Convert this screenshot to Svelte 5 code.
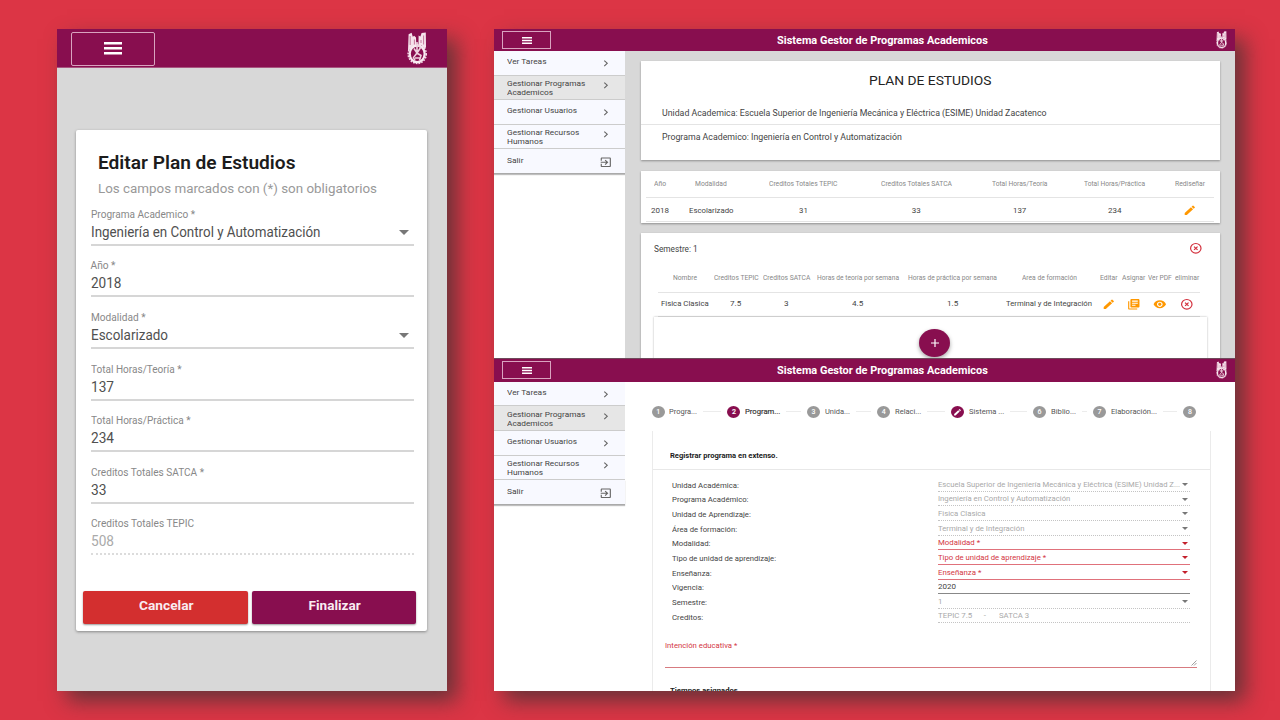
<script>
  // Stretches a line of text horizontally so that it fills the given width.
  function fit(node, width) {
    const natural = node.getBoundingClientRect().width;
    node.style.width = `${width}px`;
    node.style.transform = `scaleX(${width / natural})`;
  }

  const fields = [
    { label: 'Programa Academico *', lw: 104, value: 'Ingeniería en Control y Automatización', vw: 229.5, select: true },
    { label: 'Año *', lw: 25, value: '2018', vw: 30.5 },
    { label: 'Modalidad *', lw: 54.5, value: 'Escolarizado', vw: 77, select: true },
    { label: 'Total Horas/Teoría *', lw: 90.5, value: '137', vw: 23 },
    { label: 'Total Horas/Práctica *', lw: 99.5, value: '234', vw: 23 },
    { label: 'Creditos Totales SATCA *', lw: 113, value: '33', vw: 15.5 },
    { label: 'Creditos Totales TEPIC', lw: 103, value: '508', vw: 23, disabled: true }
  ];

  const menu = [
    { lines: [['Ver Tareas', 39.5]] },
    { lines: [['Gestionar Programas', 78.2], ['Academicos', 46]], active: true },
    { lines: [['Gestionar Usuarios', 70]] },
    { lines: [['Gestionar Recursos', 72.3], ['Humanos', 36]] },
    { lines: [['Salir', 16.5]], exit: true }
  ];

  const plan = [
    ['Año', 12, '2018', 18],
    ['Modalidad', 31.7, 'Escolarizado', 44.5],
    ['Creditos Totales TEPIC', 68.5, '31', 8.8],
    ['Creditos Totales SATCA', 71, '33', 9],
    ['Total Horas/Teoría', 55.5, '137', 13.3],
    ['Total Horas/Práctica', 61, '234', 13.5]
  ];

  const subject = [
    ['Nombre', 24, 'Fisica Clasica', 47.8],
    ['Creditos TEPIC', 44.6, '7.5', 11.2],
    ['Creditos SATCA', 47.3, '3', 4.6],
    ['Horas de teoría por semana', 82, '4.5', 11.3],
    ['Horas de práctica por semana', 89, '1.5', 11.3],
    ['Area de formación', 55, 'Terminal y de Integración', 86]
  ];

  const steps = [
    { n: 1, label: 'Progra...', lw: 28, w: 75.7 },
    { n: 2, label: 'Program...', lw: 35.4, w: 79.6, on: true },
    { n: 3, label: 'Unida...', lw: 25, w: 70.2 },
    { n: 4, label: 'Relaci...', lw: 26.3, w: 74 },
    { n: 5, label: 'Sistema ...', lw: 35.3, w: 81.7, edit: true },
    { n: 6, label: 'Biblio...', lw: 25, w: 60 },
    { n: 7, label: 'Elaboración...', lw: 46, w: 90.5 },
    { n: 8, w: 13 }
  ];

  const details = [
    ['Unidad Académica:', 66.8, 'Escuela Superior de Ingeniería Mecánica y Eléctrica (ESIME) Unidad Z...', 242, 'off', true],
    ['Programa Académico:', 76.5, 'Ingeniería en Control y Automatización', 132.3, 'off', true],
    ['Unidad de Aprendizaje:', 78.8, 'Fisica Clasica', 47.6, 'off', true],
    ['Área de formación:', 65, 'Terminal y de Integración', 86.4, 'off', true],
    ['Modalidad:', 38.4, 'Modalidad *', 42, 'error', true],
    ['Tipo de unidad de aprendizaje:', 104, 'Tipo de unidad de aprendizaje *', 108, 'error', true],
    ['Enseñanza:', 39.6, 'Enseñanza *', 43.3, 'error', true],
    ['Vigencia:', 31.8, '2020', 18, 'plain', false],
    ['Semestre:', 35, '1', 4.4, 'off', true],
    ['Creditos:', 31.2, 'TEPIC 7.5', 34.3, 'off', false]
  ];

  const EDIT = 'M3 17.25V21h3.75L17.81 9.94l-3.75-3.75L3 17.25zM20.71 7.04a.996.996 0 0 0 0-1.41l-2.34-2.34a.996.996 0 0 0-1.41 0l-1.83 1.83 3.75 3.75 1.83-1.83z';
  const BOOKS = 'M4 6H2v14c0 1.1.9 2 2 2h14v-2H4V6zm16-4H8c-1.1 0-2 .9-2 2v12c0 1.1.9 2 2 2h12c1.1 0 2-.9 2-2V4c0-1.1-.9-2-2-2zm-1 9H9V9h10v2zm-4 4H9v-2h6v2zm4-8H9V5h10v2z';
  const EYE = 'M12 4.5C7 4.5 2.73 7.61 1 12c1.73 4.39 6 7.5 11 7.5s9.27-3.11 11-7.5c-1.73-4.39-6-7.5-11-7.5zM12 17c-2.76 0-5-2.24-5-5s2.24-5 5-5 5 2.24 5 5-2.24 5-5 5zm0-8c-1.66 0-3 1.34-3 3s1.34 3 3 3 3-1.34 3-3-1.34-3-3-3z';
  const EXIT = 'M10.09 15.59L11.5 17l5-5-5-5-1.41 1.41L12.67 11H3v2h9.67l-2.58 2.59zM19 3H5c-1.11 0-2 .9-2 2v4h2V5h14v14H5v-4H3v4c0 1.1.89 2 2 2h14c1.1 0 2-.9 2-2V5c0-1.1-.9-2-2-2z';
  const CHEVRON = 'M10 6L8.59 7.41 13.17 12l-4.58 4.59L10 18l6-6z';
</script>

{#snippet t(text, width)}<span class="fit" use:fit={width}>{text}</span>{/snippet}

{#snippet icon(d)}
  <svg class="icon" viewBox="0 0 24 24" preserveAspectRatio="none"><path {d} /></svg>
{/snippet}

{#snippet cancel()}
  <svg class="icon cancel" viewBox="0 0 24 24" preserveAspectRatio="none">
    <circle cx="12" cy="12" r="9.2" /><path d="M8.9 8.9l6.2 6.2M15.1 8.9l-6.2 6.2" />
  </svg>
{/snippet}

{#snippet burger()}
  <div class="burger">
    <svg viewBox="0 0 18 12" preserveAspectRatio="none"><path d="M0 0h18v2.4H0zM0 4.8h18v2.4H0zM0 9.6h18V12H0z" /></svg>
  </div>
{/snippet}

{#snippet crest()}
  <svg class="crest" viewBox="0 0 20 33" preserveAspectRatio="none">
    <path class="solid" d="M1.6 2.2L4.6.8l1.2 4 1.4-1 1.8 1.6.3 8.6-4 1.5L1 19zM11.6 3.6l1.8 1L14.6 1l4.2-.4.2 15-2 .8-2.5-2.9-3-.8z" />
    <circle class="teeth" cx="10.2" cy="22" r="9.1" transform="matrix(1 0 0 1.05 0 -1.2)" />
    <ellipse class="ring" cx="10.2" cy="21.8" rx="7.5" ry="8.3" />
    <path class="detail" d="M10 10v10M7 16.5l3 4.5 4-6M10 21l-3.5 4.5 1.5 3M10.5 21.5l3.5 2-1.5 5M8 26h5M11 13l3 3" />
    <path class="mark" d="M3.2 4v9M16.6 3.5v9M7.4 7.5v5M14 8v3" />
  </svg>
{/snippet}

{#snippet topbar()}
  <header class="bar">
    {@render burger()}
    <h1>{@render t('Sistema Gestor de Programas Academicos', 210.8)}</h1>
    {@render crest()}
  </header>
{/snippet}

{#snippet sidebar()}
  <nav>
    {#each menu as item}
      <div class="item" class:active={item.active} class:double={item.lines.length > 1}>
        <div class="lines">
          {#each item.lines as [text, w]}<div>{@render t(text, w)}</div>{/each}
        </div>
        {@render icon(item.exit ? EXIT : CHEVRON)}
      </div>
    {/each}
  </nav>
{/snippet}

<div class="page">
  <section class="phone">
    <header class="bar">
      {@render burger()}
      {@render crest()}
    </header>
    <div class="form">
      <h2>{@render t('Editar Plan de Estudios', 197.5)}</h2>
      <p>{@render t('Los campos marcados con (*) son obligatorios', 279)}</p>
      {#each fields as f}
        <div class="field" class:disabled={f.disabled}>
          <div class="label">{@render t(f.label, f.lw)}</div>
          <div class="value">{@render t(f.value, f.vw)}{#if f.select}<i class="caret"></i>{/if}</div>
        </div>
      {/each}
      <div class="actions">
        <button class="no">{@render t('Cancelar', 54.5)}</button>
        <button>{@render t('Finalizar', 52)}</button>
      </div>
    </div>
  </section>

  <section class="desk">
    <div class="shot first">
      {@render topbar()}
      <div class="body">
        {@render sidebar()}
        <main class="gray">
          <div class="card intro">
            <h2>{@render t('PLAN DE ESTUDIOS', 122.5)}</h2>
            <div class="line">{@render t('Unidad Academica: Escuela Superior de Ingeniería Mecánica y Eléctrica (ESIME) Unidad Zacatenco', 384.5)}</div>
            <div class="line">{@render t('Programa Academico: Ingeniería en Control y Automatización', 239.8)}</div>
          </div>
          <div class="card plan">
            <div class="row head">
              {#each plan as [h, w]}<div>{@render t(h, w)}</div>{/each}
              <div>{@render t('Rediseñar', 30)}</div>
            </div>
            <div class="row">
              {#each plan as [, , v, w]}<div>{@render t(v, w)}</div>{/each}
              <div>{@render icon(EDIT)}</div>
            </div>
          </div>
          <div class="card term">
            <div class="title">{@render t('Semestre: 1', 43.7)}{@render cancel()}</div>
            <div class="row head">
              {#each subject as [h, w]}<div>{@render t(h, w)}</div>{/each}
              <div>{@render t('Editar', 17.5)}</div>
              <div>{@render t('Asignar', 23.3)}</div>
              <div>{@render t('Ver PDF', 23.8)}</div>
              <div>{@render t('eliminar', 24.3)}</div>
            </div>
            <div class="row">
              {#each subject as [, , v, w]}<div>{@render t(v, w)}</div>{/each}
              <div>{@render icon(EDIT)}</div>
              <div>{@render icon(BOOKS)}</div>
              <div>{@render icon(EYE)}</div>
              <div>{@render cancel()}</div>
            </div>
            <div class="add">
              <div class="fab"><svg viewBox="0 0 10 10"><path d="M5 1v8M1 5h8" /></svg></div>
            </div>
          </div>
        </main>
      </div>
    </div>

    <div class="shot second">
      {@render topbar()}
      <div class="body">
        {@render sidebar()}
        <main>
          <div class="stepper">
            {#each steps as s}
              <div class="step" class:on={s.on} class:edit={s.edit} style:width="{s.w}px">
                <span class="dot">{#if s.edit}{@render icon(EDIT)}{:else}{s.n}{/if}</span>
                {#if s.label}{@render t(s.label, s.lw)}<i></i>{/if}
              </div>
            {/each}
          </div>
          <div class="sheet">
            <h3>{@render t('Registrar programa en extenso.', 107.6)}</h3>
            <div class="grid">
              {#each details as [label, lw, value, vw, kind, select], i}
                <div class="pair">
                  <div class="name">{@render t(label, lw)}</div>
                  <div class="input {kind}">
                    {@render t(value, vw)}
                    {#if i === 9}<span class="dash">-</span>{@render t('SATCA 3', 30)}{/if}
                    {#if select}<i class="caret"></i>{/if}
                  </div>
                </div>
              {/each}
            </div>
            <div class="area">
              {@render t('Intención educativa *', 72.3)}
              <svg viewBox="0 0 6 6"><path d="M.5 5.5l5-5M3 5.5L5.5 3" /></svg>
            </div>
            <h3 class="next">{@render t('Tiempos asignados', 67.8)}</h3>
          </div>
        </main>
      </div>
    </div>
  </section>
</div>

<style>
  :global(body) { margin: 0; background: #dc3545; }
  * { box-sizing: border-box; }
  h1, h2, h3, p { margin: 0; font-weight: 500; }

  .page {
    width: 1280px;
    height: 720px;
    padding: 29px 45px 29px 57px;
    display: flex;
    justify-content: space-between;
    background: #dc3545;
    font-family: Roboto, "Liberation Sans", sans-serif;
    color: #444;
    overflow: hidden;
  }
  .fit { display: block; flex: none; white-space: nowrap; width: max-content; transform-origin: 0 50%; }

  .phone, .desk { height: 662px; box-shadow: 10px 10px 20px rgba(50, 50, 50, .68); }
  .phone { width: 390px; background: #d8d8d8; }
  .desk { width: 741px; background: #fff; overflow: hidden; }

  .bar { display: flex; align-items: center; background: #880e4f; color: #fff; }
  .burger { display: flex; align-items: center; justify-content: center; border: 1px solid #d9a3bf; }
  .burger svg { display: block; fill: #fff; }
  .crest { fill: none; stroke: #fff; }
  .crest .solid { fill: #f6e3ec; stroke: none; }
  .crest .teeth { stroke: #f3dce7; stroke-width: 1.5; stroke-dasharray: 1.7 1.1; }
  .crest .ring { stroke: #f8eaf0; stroke-width: 2.3; }
  .crest .detail { stroke: #eed0de; stroke-width: 1.6; }
  .crest .mark { stroke: #b75c88; stroke-width: .8; }

  .phone .bar { height: 39px; padding: 0 20px 0 13.5px; justify-content: space-between; border-bottom: 1px solid #a85580; }
  .phone .burger { width: 84.5px; height: 34px; border: 1.5px solid #d9a3bf; border-radius: 2px; margin-top: 1px; }
  .phone .burger svg { width: 18.5px; height: 12.5px; }
  .phone .crest { width: 20px; height: 33px; }

  .form {
    width: 351px;
    height: 501px;
    margin: 62px 0 0 19px;
    padding: 22.3px 7px 0;
    background: #fff;
    border-radius: 2px;
    box-shadow: 0 1px 3px rgba(0, 0, 0, .38);
  }
  .form h2 { padding-left: 15px; font-size: 18px; line-height: 22px; font-weight: 600; color: #1c1c1c; }
  .form p { padding-left: 15px; margin: 4.4px 0 11.2px; font-size: 13.6px; line-height: 18px; font-weight: 400; color: #999; }
  .field { width: 323px; height: 37.9px; margin: 0 0 13.7px 7.5px; border-bottom: 2px solid #d6d6d6; }
  .label { font-size: 10.2px; line-height: 14px; color: #888; }
  .value { display: flex; align-items: center; justify-content: space-between; font-size: 14px; line-height: 20px; color: #505050; }
  .caret { width: 0; height: 0; border: 5px solid transparent; border-top-color: #777; border-bottom: 0; }
  .value .caret { margin: 1px 5px 0 0; }
  .field.disabled { border-bottom-style: dotted; border-color: #dcdcdc; }
  .disabled .value { color: #aaa; }
  .actions { display: flex; gap: 4px; margin-top: 35.3px; }
  button {
    width: 164.5px; height: 33px; padding: 0 0 3px; border: 0; border-radius: 2px;
    display: flex; align-items: center; justify-content: center;
    background: #880e4f; color: #f9ecf2; font: 700 13.2px Roboto, sans-serif;
    box-shadow: 0 1px 2px rgba(0, 0, 0, .4);
  }
  .no { background: #d32f2f; }

  .shot { display: flex; flex-direction: column; overflow: hidden; }
  .first { height: 330px; border-bottom: 1px solid #6e4a5b; }
  .second { height: 332px; }
  .shot .bar { flex: none; height: 22px; padding: 0 8px 0 8.4px; justify-content: space-between; }
  .second .bar { height: 22.7px; }
  .shot .burger { width: 49px; height: 18px; }
  .shot .burger svg { width: 10.5px; height: 7px; }
  .shot .crest { width: 11px; height: 18px; }
  h1 { margin: 1px 0 0 -3.5px; font-size: 10.9px; line-height: 14px; font-weight: 700; }
  .body { flex: 1; display: flex; min-height: 0; }
  nav { width: 131.4px; flex: none; background: #fff; }
  .item {
    height: 24.6px; padding: 6.3px 13px 0; display: flex; justify-content: space-between;
    background: #f8f9ff; border-bottom: 1px solid #ccc; font-size: 7.9px; line-height: 9px; color: #444;
  }
  .second .item { height: 24.7px; }
  .item.double { padding-top: 3.3px; }
  .item.active { background: #e6e6e6; }
  .item:last-child { border-color: #aaa; box-shadow: 0 1px 1px rgba(0, 0, 0, .25); }
  .icon { display: block; flex: none; width: 13.6px; height: 12.6px; fill: #ff9800; }
  .item .icon { fill: #666; }
  .cancel { fill: none; stroke: #d32f3c; stroke-width: 2.1; }

  main { flex: 1; min-width: 0; }
  .gray { background: #d8d8d8; padding: 10.4px 15.4px 0 15.4px; }
  .card { background: #fff; box-shadow: 0 1px 2px rgba(0, 0, 0, .35); }
  .intro { height: 98.6px; margin-bottom: 10.6px; }
  .intro h2 { display: flex; justify-content: center; padding-top: 11.5px; height: 39px; font-size: 12.8px; line-height: 16px; font-weight: 400; color: #222; }
  .intro .line { height: 24.3px; padding: 7.2px 0 0 21.6px; border-bottom: 1px solid #e4e4e4; font-size: 8.2px; line-height: 10px; }
  .intro .line + .line { border: 0; }
  .row { display: grid; align-items: center; font-size: 8px; line-height: 10px; border-bottom: 1px solid #e4e4e4; }
  .row div { display: flex; justify-content: center; min-width: 0; }
  .head { font-size: 6.7px; color: #888; }
  .plan { height: 52px; margin-bottom: 10px; padding: 0 5.4px; }
  .plan .row { grid-template-columns: 28px 74px 110px 116px 90.6px 99.8px 50.1px; height: 24px; padding-top: 1.4px; }
  .plan .head { height: 27.8px; padding-top: .4px; }
  .term { height: 200px; padding: 0 13px; }
  .term .title { display: flex; justify-content: space-between; align-items: center; padding-right: 4px; height: 32px; font-size: 8.2px; line-height: 10px; }
  .term .row { grid-template-columns: 54.6px 46.8px 54.6px 87.4px 101.8px 91.6px 28.4px 21px 31.6px 22.4px; width: 542px; margin-left: 4.3px; height: 24px; }
  .term .head { height: 28.2px; }
  .add { width: 553px; height: 100px; padding-top: 12px; display: flex; justify-content: center; box-shadow: 0 0 2px rgba(0, 0, 0, .3); }
  .fab { display: flex; align-items: center; justify-content: center; width: 31px; height: 28px; margin-left: 9.4px; border-radius: 50%; background: #880e4f; box-shadow: 0 2px 4px rgba(0, 0, 0, .35); }
  .fab svg { width: 10px; height: 10px; stroke: #fff; stroke-width: 1.2; }

  .second main { padding: 24.3px 24.5px 0 26.4px; }
  .stepper { display: flex; height: 12px; font-size: 7.7px; line-height: 12px; }
  .step { flex: none; display: flex; align-items: center; color: #555; }
  .step.on { color: #333; -webkit-text-stroke: .15px; }
  .dot { flex: none; width: 13px; height: 12px; margin-right: 4.6px; border-radius: 50%; display: flex; align-items: center; justify-content: center; background: #999; color: #fff; font-size: 7px; font-weight: 500; }
  .step:last-child .dot { margin: 0; }
  .on .dot, .edit .dot { background: #880e4f; }
  .dot .icon { width: 9px; height: 8.5px; fill: #fff; }
  .step i { flex: 1; height: 1px; margin: 0 6px; background: #ececec; }
  .sheet { height: 300px; margin-top: 13px; border: solid #ebebeb; border-width: 0 1px; }
  h3 { padding: 20.5px 0 0 16.8px; height: 39px; border-bottom: 1px solid #e8e8e8; font-size: 7.9px; line-height: 10px; font-weight: 700; color: #1c1c1c; }
  .grid { padding: 8.6px 19.5px 0 18.9px; }
  .pair { display: flex; justify-content: space-between; height: 14.67px; font-size: 8px; line-height: 10px; }
  .name { padding-top: 2.2px; }
  .input { display: flex; align-items: center; width: 252.5px; height: 13px; border-bottom: 1px solid #888; font-size: 7.9px; line-height: 10px; padding-right: 2px; }
  .input .caret { margin-left: auto; border-width: 3px; border-bottom: 0; }
  .off { color: #a9a9a9; border-bottom: 1px dotted #c4c4c4; }
  .error { color: #d33643; border-color: #e0717b; }
  .error .caret { border-top-color: #c4202c; }
  .dash { margin: 0 13px 0 12px; }
  .area { display: flex; justify-content: space-between; align-items: flex-end; height: 30.6px; margin: 12px 13px 0 12px; border-bottom: 1px solid #d77b80; color: #d33643; font-size: 8px; line-height: 10px; }
  .area .fit { align-self: flex-start; margin-top: 4px; }
  .area svg { width: 6px; height: 6px; margin-bottom: 1px; stroke: #888; stroke-width: .8; }
  .next { padding-top: 18.1px; border: 0; }
</style>
